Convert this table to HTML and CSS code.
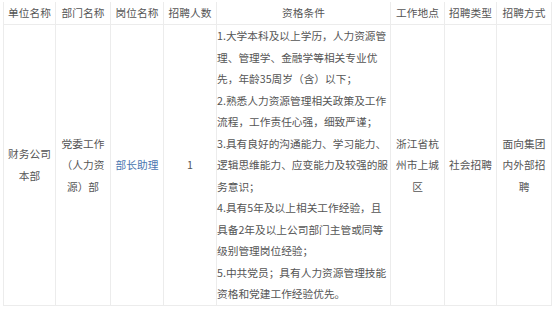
FILE: index.html
```html
<!DOCTYPE html>
<html lang="zh">
<head>
<meta charset="utf-8">
<link rel="stylesheet" href="styles.css">
</head>
<body>
<table class="jobs">
  <colgroup>
    <col class="c1"><col class="c2"><col class="c3"><col class="c4"><col class="c5"><col class="c6"><col class="c7"><col class="c8">
  </colgroup>
  <thead>
    <tr>
      <th>单位名称</th><th>部门名称</th><th>岗位名称</th><th>招聘人数</th><th>资格条件</th><th>工作地点</th><th>招聘类型</th><th>招聘方式</th>
    </tr>
  </thead>
  <tbody>
    <tr>
      <td>财务公司本部</td>
      <td>党委工作（人力资源）部</td>
      <td><span class="link">部长助理</span></td>
      <td>1</td>
      <td class="req">1.大学本科及以上学历，人力资源管理、管理学、金融学等相关专业优先，年龄35周岁（含）以下；<br>2.熟悉人力资源管理相关政策及工作流程，工作责任心强，细致严谨；<br>3.具有良好的沟通能力、学习能力、逻辑思维能力、应变能力及较强的服务意识；<br>4.具有5年及以上相关工作经验，且具备2年及以上公司部门主管或同等级别管理岗位经验；<br>5.中共党员；具有人力资源管理技能资格和党建工作经验优先。</td>
      <td>浙江省杭州市上城区</td>
      <td>社会招聘</td>
      <td>面向集团内外部招聘</td>
    </tr>
  </tbody>
</table>
</body>
</html>
```
FILE: styles.css
```css
html, body {
  margin: 0;
  padding: 0;
  background: #ffffff;
}
body {
  padding: 2px 3px 0 3px;
  font-family: "Noto Sans CJK SC", "Noto Sans", sans-serif;
  color: #555555;
}
.jobs {
  border-collapse: collapse;
  table-layout: fixed;
  width: 548px;
  font-size: 10.7px;
  line-height: 21.5px;
}
.c1 { width: 52px; }
.c2 { width: 55px; }
.c3 { width: 53px; }
.c4 { width: 53px; }
.c5 { width: 174px; }
.c6 { width: 54px; }
.c7 { width: 52px; }
.c8 { width: 55px; }
.jobs th, .jobs td {
  border: 1px solid #ececec;
  padding: 0 4px;
  text-align: center;
  vertical-align: middle;
  font-weight: normal;
  word-break: break-all;
}
.jobs thead th {
  border-top: none;
  height: 22px;
  line-height: 22px;
  padding: 0 2px;
}
.jobs td.req {
  text-align: left;
  padding: 0;
}
.link {
  color: #4a76b0;
}
```
